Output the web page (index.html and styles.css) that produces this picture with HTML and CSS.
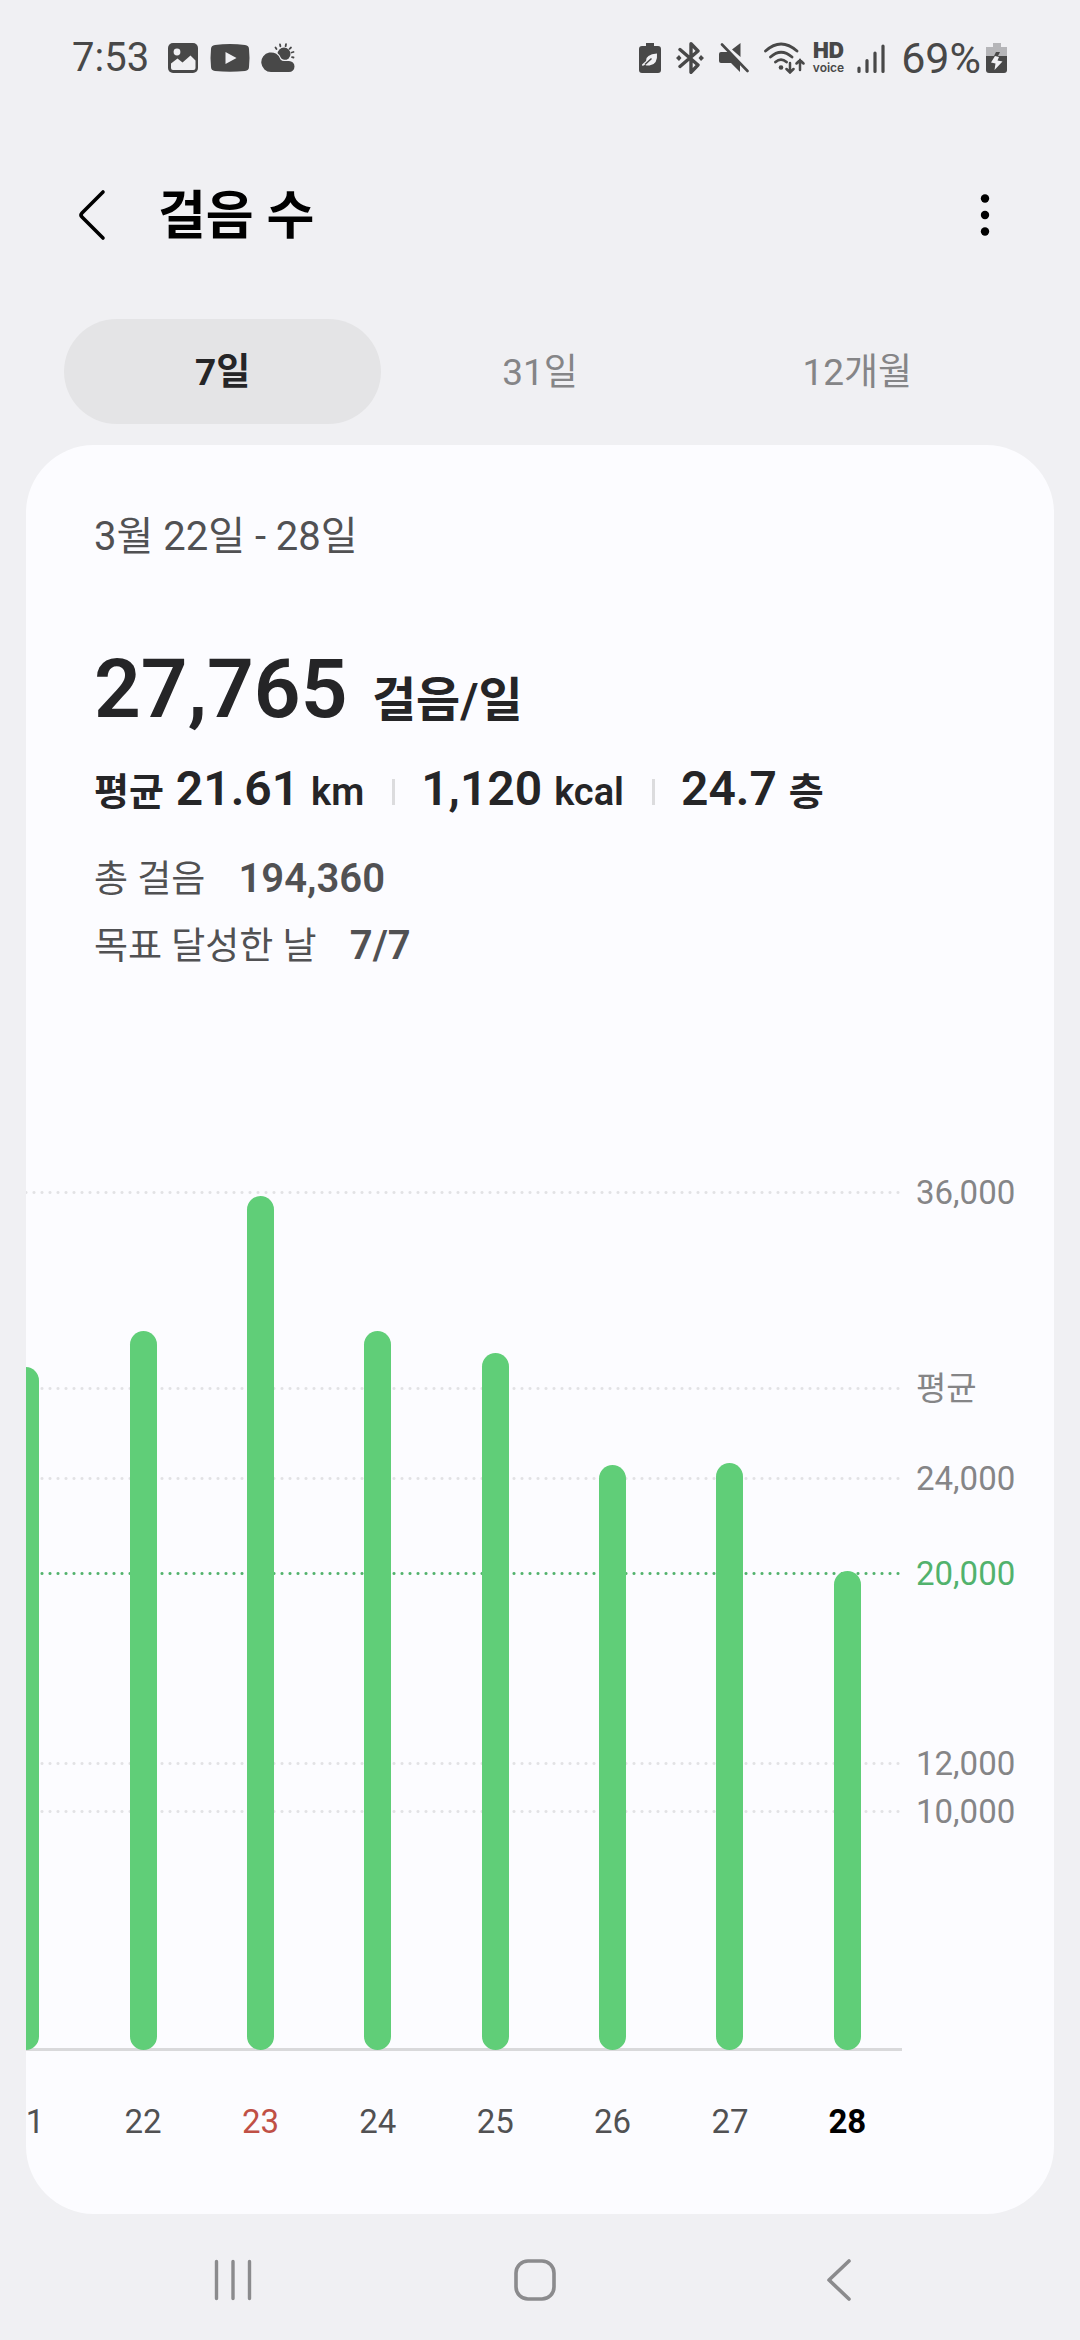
FILE: index.html
```html
<!DOCTYPE html>
<html lang="ko">
<head>
    <meta charset="UTF-8">
    <meta name="viewport" content="width=device-width, initial-scale=1.0">
    <title>걸음 수</title>
    <link rel="stylesheet" href="styles.css">
</head>
<body>

    <div class="status-bar">
        <div class="status-left">
            <span class="clock">7:53</span>
            <svg width="32" height="32" viewBox="0 0 32 32">
                <rect x="1" y="1" width="30" height="30" rx="5" fill="#484848"/>
                <circle cx="10" cy="10" r="3.4" fill="#f0f0f3"/>
                <path d="M4 21.5l6.5-5 5 4 8-7 5 5V26a2 2 0 0 1-2 2H6a2 2 0 0 1-2-2z" fill="#f0f0f3"/>
            </svg>
            <svg width="40" height="30" viewBox="0 0 40 30">
                <path d="M5 2q15-2 30 0 4 .5 4 4 1 9 0 18 0 3.500-4 4-15 1.500-30 0-4-.5-4-4-1-9 0-18 0-3.500 4-4z" fill="#484848"/>
                <path d="M15.500 9l11 6-11 6z" fill="#f0f0f3"/>
            </svg>
            <svg width="34" height="30" viewBox="0 0 34 30">
                <g stroke="#484848" stroke-width="1.800" stroke-linecap="round">
                    <path d="M14.500 4.500l1 1.500M19 1.500l.4 1.800M25 1.200l-.4 2M30 4.500l-1.400 1.300M32.500 9l-1.800.5M32.500 14.500l-1.500-.3"/>
                </g>
                <circle cx="23" cy="11" r="6.500" fill="#484848"/>
                <g stroke="#f0f0f3" stroke-width="2.500" paint-order="stroke" fill="#484848">
                    <path d="M10 29A9.800 9.800 0 1 1 19.500 16.500Q21 18 23 18h5a5.500 5.500 0 0 1 0 11z"/>
                </g>
            </svg>
        </div>
        <div class="status-right">
            <svg width="22" height="32" viewBox="0 0 22 32">
                <path d="M7 1h8v3h4a3 3 0 0 1 3 3v21a3 3 0 0 1-3 3H3a3 3 0 0 1-3-3V7a3 3 0 0 1 3-3h4z" fill="#484848"/>
                <path d="M18 11.500q1 11-7.500 12-3 .3-4.500-.8L3.500 24l-.5-1.500 4-3.500q-.5-6.500 11-7.500z" fill="#f0f0f3"/>
                <path d="M6 22.500l6.500-6" stroke="#484848" stroke-width="1.500"/>
            </svg>
            <svg width="28" height="32" viewBox="0 0 28 32">
                <path d="M4 7.500l18 15.500-7 7.200V1.800L22 9 4 24.500" fill="none" stroke="#484848" stroke-width="3.400" stroke-linejoin="round" stroke-linecap="round"/>
                <path d="M0 16l3-3 2.500 3L3 19zM28 16l-3-3-2.500 3 2.500 3z" fill="#484848"/>
            </svg>
            <svg width="30" height="32" viewBox="0 0 30 32">
                <path d="M2 10h7l12 12v8l-9-9H2a2 2 0 0 1-2-2v-7a2 2 0 0 1 2-2zM13 7.500L21.500 1v14z" fill="#484848"/>
                <path d="M3 2.500L28.500 29" stroke="#484848" stroke-width="2.600" stroke-linecap="round"/>
            </svg>
            <svg width="42" height="32" viewBox="0 0 42 32">
                <g fill="none" stroke="#484848" stroke-width="2.800" stroke-linecap="round">
                    <path d="M1.500 9Q17-5 33 9M6.500 15Q17 5.500 28 15M11.500 20q5.500-4.800 11 0"/>
                    <path d="M26 21v9M22.500 27l3.500 3.500 3.500-3.500M36 28V18M32.500 21.500L36 18l3.500 3.500" stroke-width="2.500"/>
                </g>
                <circle cx="17" cy="25.500" r="2.300" fill="#484848"/>
            </svg>
            <span class="hd-voice"><b>HD</b><span>voice</span></span>
            <svg width="30" height="32" viewBox="0 0 30 32">
                <path d="M3 26v3.500M11 18.500v11M19 11v18.500M27 4v25.500" stroke="#484848" stroke-width="3.200" stroke-linecap="round"/>
            </svg>
            <span class="battery">
                <span>69%</span>
                <svg width="22" height="32" viewBox="0 0 22 32">
                    <path d="M7 1h8v4h6v9H0V5h7z" fill="#b5b5b8"/>
                    <path d="M0 14h21v14a3 3 0 0 1-3 3H3a3 3 0 0 1-3-3z" fill="#484848"/>
                    <path d="M10 10h4l-2 4H8z" fill="#484848"/>
                    <path d="M9 14l4 1-1.500 3.500 5 1-8 8.500 1-6.500-4.500-1z" fill="#f0f0f3"/>
                </svg>
            </span>
        </div>
    </div>

    <header class="app-bar">
        <button class="icon-btn" aria-label="뒤로">
            <svg width="32" height="56" viewBox="0 0 32 56">
                <path d="M28 5L7 26q-2 2 0 4l21 21" fill="none" stroke="#000" stroke-width="3.600" stroke-linecap="round"/>
            </svg>
        </button>
        <h1>걸음 수</h1>
        <button class="icon-btn more" aria-label="더보기">
            <svg width="10" height="44" viewBox="0 0 10 44">
                <circle cx="5" cy="5.500" r="4.200"/>
                <circle cx="5" cy="22" r="4.200"/>
                <circle cx="5" cy="38.500" r="4.200"/>
            </svg>
        </button>
    </header>

    <div class="tabs" role="tablist">
        <button class="tab active" role="tab" aria-selected="true">7일</button>
        <button class="tab" role="tab" aria-selected="false">31일</button>
        <button class="tab" role="tab" aria-selected="false">12개월</button>
    </div>

    <main class="card">
        <section class="summary">
            <p class="period">3월 22일 - 28일</p>
            <p class="steps">27,765 <span>걸음/일</span></p>
            <div class="averages">
                <p><span>평균</span> 21.61 <span>km</span></p>
                <p>1,120 <span>kcal</span></p>
                <p>24.7 <span>층</span></p>
            </div>
            <div class="totals">
                <p>총 걸음 <b>194,360</b></p>
                <p>목표 달성한 날 <b>7/7</b></p>
            </div>
        </section>

        <section class="chart">
            <!-- flex-grow is the distance in steps down to the next line -->
            <div class="lines">
                <div class="line" style="flex-grow: 8235"></div>
                <div class="line" style="flex-grow: 3765"></div>
                <div class="line" style="flex-grow: 4000"></div>
                <div class="line goal" style="flex-grow: 8000"></div>
                <div class="line" style="flex-grow: 2000"></div>
                <div class="line" style="flex-grow: 10000"></div>
            </div>

            <div class="bars">
                <div class="bar" style="height: 79.5%"></div>
                <div class="bar" style="height: 83.7%"></div>
                <div class="bar" style="height: 99.4%"></div>
                <div class="bar" style="height: 83.7%"></div>
                <div class="bar" style="height: 81.1%"></div>
                <div class="bar" style="height: 68.1%"></div>
                <div class="bar" style="height: 68.3%"></div>
                <div class="bar" style="height: 55.8%"></div>
            </div>

            <div class="scale">
                <div style="flex-grow: 8235"><span>36,000</span></div>
                <div style="flex-grow: 3765"><span>평균</span></div>
                <div style="flex-grow: 4000"><span>24,000</span></div>
                <div class="goal" style="flex-grow: 8000"><span>20,000</span></div>
                <div style="flex-grow: 2000"><span>12,000</span></div>
                <div style="flex-grow: 10000"><span>10,000</span></div>
            </div>

            <div class="days">
                <span>21</span>
                <span>22</span>
                <span class="holiday">23</span>
                <span>24</span>
                <span>25</span>
                <span>26</span>
                <span>27</span>
                <span class="today">28</span>
            </div>
        </section>
    </main>

    <nav class="nav-bar">
        <button class="icon-btn" aria-label="최근 앱">
            <svg width="44" height="44" viewBox="0 0 44 44">
                <path d="M5.500 3.500v37M22 3.500v37M38.500 3.500v37" stroke="#8b8b8d" stroke-width="3.400" stroke-linecap="round"/>
            </svg>
        </button>
        <button class="icon-btn" aria-label="홈">
            <svg width="44" height="44" viewBox="0 0 44 44">
                <rect x="3" y="3" width="38" height="38" rx="12" fill="none" stroke="#8b8b8d" stroke-width="3.600"/>
            </svg>
        </button>
        <button class="icon-btn" aria-label="뒤로">
            <svg width="44" height="44" viewBox="0 0 44 44">
                <path d="M33 3L13 22l20 19" fill="none" stroke="#8b8b8d" stroke-width="3.600" stroke-linecap="round" stroke-linejoin="round"/>
            </svg>
        </button>
    </nav>

</body>
</html>
```

FILE: styles.css
```css
* {
    margin: 0;
    padding: 0;
    box-sizing: border-box;
}

body {
    min-height: 100vh;
    display: flex;
    flex-direction: column;
    background-color: #f0f0f3;
    font-family: Roboto, "Noto Sans CJK KR", sans-serif;
    color: #252527;
}

button {
    border: none;
    background: none;
    font-family: inherit;
    cursor: pointer;
}

svg {
    display: block;
    flex-shrink: 0;
}

/* Status bar */
.status-bar {
    height: 116px;
    display: flex;
    justify-content: space-between;
    align-items: center;
    padding: 0 72px;
    font-size: 40px;
    line-height: 48px;
    color: #484848;
}

.status-left {
    display: flex;
    align-items: center;
    gap: 11px;
}

.status-left .clock {
    margin-right: 7px;
}

.status-right {
    display: flex;
    align-items: center;
    gap: 15px;
}

.battery {
    display: flex;
    align-items: center;
    gap: 5px;
    font-size: 43px;
}

.hd-voice {
    display: flex;
    flex-direction: column;
    align-items: center;
    margin: 0 -3px 0 -8px;
    font-family: Inter, sans-serif;
    font-size: 12px;
    font-weight: 600;
    line-height: 15px;
}

.hd-voice b {
    font-size: 21px;
    line-height: 19px;
}

/* App bar */
.app-bar {
    height: 203px;
    display: flex;
    align-items: center;
    padding: 0 75px 6px;
}

.app-bar h1 {
    flex: 1;
    margin-left: 51px;
    padding-bottom: 6px;
    font-size: 52px;
    font-weight: 700;
    color: #000;
}

.icon-btn {
    display: flex;
    justify-content: center;
    align-items: center;
}

.app-bar .more {
    width: 40px;
}

/* Tabs */
.tabs {
    display: flex;
    padding: 0 64px;
}

.tab {
    flex: 1;
    height: 105px;
    padding-bottom: 6px;
    border-radius: 53px;
    font-size: 37px;
    color: #858587;
}

.tab.active {
    background-color: #e4e4e6;
    font-weight: 700;
    color: #252527;
}

/* Card */
.card {
    flex: 1;
    margin: 21px 26px 0;
    border-radius: 68px;
    background-color: #fcfcff;
    overflow: hidden;
}

.summary {
    padding: 62px 68px 0;
}

.period {
    font-size: 40px;
    line-height: 60px;
    color: #515153;
}

.steps {
    margin-top: 66px;
    font-size: 82px;
    font-weight: 600;
    line-height: 112px;
}

.steps span {
    margin-left: 4px;
    font-size: 48px;
}

.averages {
    display: flex;
    align-items: center;
    margin-top: -6px;
    font-size: 48px;
    font-weight: 600;
    line-height: 76px;
}

.averages span {
    font-size: 38px;
}

.averages p + p {
    display: flex;
    align-items: baseline;
    gap: 12px;
}

.averages p + p::before {
    content: "";
    width: 3px;
    height: 26px;
    margin: 0 14px 0 28px;
    background-color: #dcdcde;
}

.totals {
    margin-top: 16px;
    font-size: 37px;
    line-height: 66px;
    color: #515153;
}

.totals b {
    margin-left: 24px;
    font-size: 40px;
    font-weight: 600;
}

/* Chart */
.chart {
    display: grid;
    grid-template-columns: 1fr 152px;
    grid-template-rows: 860px auto;
    margin-top: 211px;
}

.lines,
.bars {
    grid-row: 1;
    grid-column: 1;
}

.lines,
.scale {
    display: flex;
    flex-direction: column;
}

.lines {
    border-bottom: 3px solid #d9d9db;
}

.line {
    background: radial-gradient(circle, #e2e2e5 1px, transparent 2px) right top / 8px 3px repeat-x;
}

.line.goal {
    background-image: radial-gradient(circle, #52b26d 1px, transparent 2px);
}

/* the first day is cut in half by the edge of the card */
.bars,
.days {
    display: flex;
    margin-left: -59px;
    margin-right: -4px;
}

.bars {
    justify-content: space-around;
    align-items: flex-end;
    margin-bottom: 1px;
}

.bar {
    width: 27px;
    border-radius: 14px;
    background-color: #60ce78;
}

.scale {
    margin: 0 0 3px 14px;
    font-size: 33px;
    line-height: 40px;
    color: #858587;
}

.scale div {
    flex-basis: 0;
    min-height: 0;
}

.scale span {
    display: block;
    margin-top: -18px;
}

.scale .goal {
    color: #52b26d;
}

.days {
    margin-top: 49px;
    font-size: 33px;
    line-height: 44px;
    color: #515153;
}

.days span {
    flex: 1;
    text-align: center;
}

.days .holiday {
    color: #c05046;
}

.days .today {
    font-weight: 700;
    color: #000;
}

/* Navigation bar */
.nav-bar {
    height: 126px;
    display: grid;
    grid-template-columns: repeat(3, 1fr);
    padding: 6px 91px 0 82px;
}
```
